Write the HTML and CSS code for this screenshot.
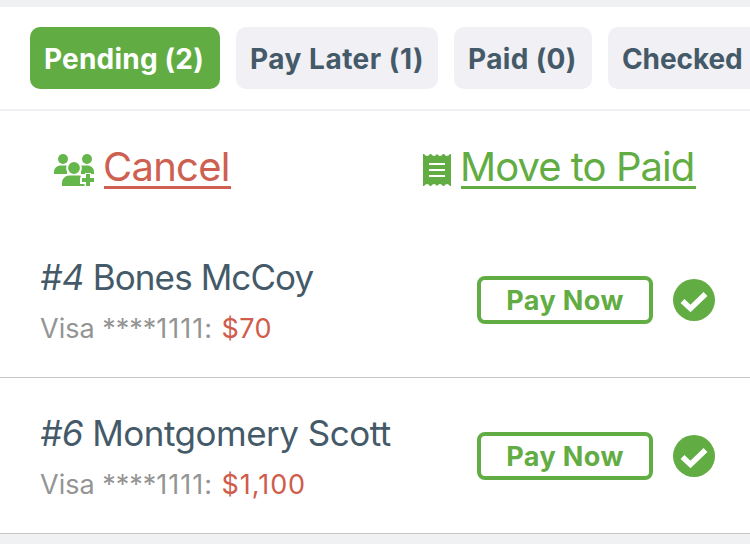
FILE: index.html
```html
<!DOCTYPE html>
<html lang="en">
<head>
<meta charset="utf-8">
<title>Payments</title>
<link rel="stylesheet" href="styles.css">
</head>
<body>
<nav class="tabs">
  <div class="tab active">Pending (2)</div>
  <div class="tab later">Pay Later (1)</div>
  <div class="tab paid">Paid (0)</div>
  <div class="tab checked">Checked</div>
</nav>
<div class="actions">
  <div class="action action-cancel">
    <svg class="users" width="40" height="33" viewBox="0 0 40 33" fill="#65b74b">
      <circle cx="9" cy="5" r="5"/><circle cx="33" cy="5" r="5"/>
      <path d="M0 20v-2c0-4 3-6.500 7-6.500h6.500L13 20z"/>
      <path d="M40 20v-2c0-4-3-6.500-7-6.500h-6.500L27 20z"/>
      <circle cx="20" cy="14" r="6.900" stroke="#fff" stroke-width="2"/>
      <path d="M8 32v-3c0-4.200 3.300-7.500 7.500-7.500h9c.8 0 1.500.1 2.200.3v1.700H26v6.500h4.500V32z"/>
      <path stroke="#fff" stroke-width="2" paint-order="stroke" d="M32 20h4v4h4v4h-4v4h-4v-4h-4v-4h4z"/>
    </svg>
    <a class="link cancel">Cancel</a>
  </div>
  <div class="action action-move">
    <svg class="receipt" width="28" height="33" viewBox="0 0 28 33">
      <path fill="#62ad43" d="M0 0h1q1.500 2 3 2T7 0h1q1.500 2 3 2t3-2q1.500 2 3 2t3-2h1q1.500 2 3 2t3-2h1v32h-1q-1.500-2-3-2t-3 2h-1q-1.500-2-3-2t-3 2q-1.500-2-3-2t-3 2H7q-1.500-2-3-2t-3 2H0z"/>
      <path d="M6 10h16M6 16h16M6 22h16" stroke="#fff" stroke-width="2"/>
    </svg>
    <a class="link move">Move to Paid</a>
  </div>
</div>
<main>
  <section class="row">
    <div class="info">
      <div class="name"><i>#4</i><span class="bones"> Bones McCoy</span></div>
      <div class="card">Visa ****<span class="digits">1111: </span><span class="amount short">$70</span></div>
    </div>
    <button class="pay">Pay Now</button>
    <svg class="check" width="42" height="42" viewBox="0 0 42 42"><circle cx="21" cy="21" r="21" fill="#62ad43"/><path d="M9.500 22l8 7.500L32.500 15" fill="none" stroke="#fff" stroke-width="5.500"/></svg>
  </section>
  <section class="row">
    <div class="info">
      <div class="name"><i>#6</i><span class="scott"> Montgomery Scott</span></div>
      <div class="card">Visa ****<span class="digits">1111: </span><span class="amount">$1,100</span></div>
    </div>
    <button class="pay">Pay Now</button>
    <svg class="check" width="42" height="42" viewBox="0 0 42 42"><circle cx="21" cy="21" r="21" fill="#62ad43"/><path d="M9.500 22l8 7.500L32.500 15" fill="none" stroke="#fff" stroke-width="5.500"/></svg>
  </section>
</main>
</body>
</html>
```
FILE: styles.css
```css
* { box-sizing: border-box; }
body {
  margin: 0;
  padding-top: 7px;
  height: 544px;
  overflow: hidden;
  background: #f0f1f3;
  color: #455a69;
  font-family: Inter, "Liberation Sans", sans-serif;
}
.tabs {
  display: flex;
  gap: 16px;
  height: 104px;
  padding: 20px 0 0 30px;
  background: #fff;
  border-bottom: 2px solid #f0f0f5;
  overflow: hidden;
}
.tab {
  flex: none;
  width: 190px;
  height: 62px;
  padding-left: 14px;
  border-radius: 10px;
  background: #f1f0f5;
  font-size: 28px;
  font-weight: 700;
  line-height: 64px;
  letter-spacing: 0.2px;
  white-space: nowrap;
}
.tab.active { background: #62ad43; color: #fff; }
.tab.later { width: 202px; letter-spacing: 0.5px; }
.tab.paid { width: 138px; letter-spacing: 0.35px; }
.tab.checked { letter-spacing: -0.1px; }
.actions {
  display: flex;
  height: 111px;
  padding: 33px 0 0 54px;
  background: #fff;
}
.action { display: flex; align-items: flex-start; }
.action-cancel { width: 369px; }
.action svg { flex: none; margin-top: 10px; }
.link {
  margin-left: 10px;
  height: 45px;
  border-bottom: 3px solid;
  font-size: 40px;
  line-height: 45px;
  white-space: nowrap;
}
.cancel { width: 127px; color: #cd6051; letter-spacing: -0.75px; text-indent: -1px; }
.move { width: 235px; color: #62ad43; letter-spacing: -0.95px; text-indent: -1px; }
.row {
  display: flex;
  align-items: center;
  height: 156px;
  padding: 0 35px 0 40px;
  background: #fff;
  border-bottom: 1px solid #c5c6c8;
}
.info { flex: 1; padding-top: 8px; white-space: nowrap; }
.name { font-size: 35px; line-height: 50px; font-variant-ligatures: none; }
.name i { letter-spacing: -0.5px; }
.bones { letter-spacing: -0.9px; }
.scott { letter-spacing: -0.5px; }
.card { font-size: 27px; line-height: 54px; color: #949494; }
.digits { letter-spacing: 1px; }
.amount { color: #d05c4c; letter-spacing: 0.95px; }
.amount.short { letter-spacing: 0.4px; }
.pay {
  width: 176px;
  height: 48px;
  margin: 0 20px 0 0;
  padding: 1px 0 0;
  border: 4px solid #62ad43;
  border-radius: 8px;
  background: #fff;
  color: #62ad43;
  font: 700 27px/40px Inter, sans-serif;
  letter-spacing: 0.4px;
}
```
